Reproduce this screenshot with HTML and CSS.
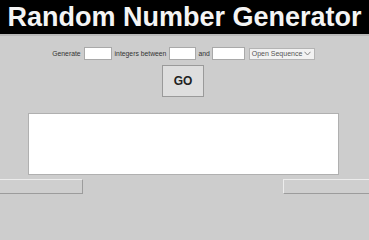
FILE: index.html
```html
<!DOCTYPE html>
<html>
<head>
<meta charset="utf-8">
<link rel="stylesheet" href="styles.css">
</head>
<body>
<header class="header"><h1 class="title">Random Number Generator</h1></header>
<main class="page">
  <div class="form-row">
    <span class="label">Generate</span>
    <input class="field field-count" type="text">
    <span class="label">integers between</span>
    <input class="field field-min" type="text">
    <span class="label label-and">and</span>
    <input class="field field-max" type="text">
    <div class="select">
      <span class="select-text">Open Sequence</span>
      <svg class="chev" width="7" height="5" viewBox="0 0 7 5"><path d="M0.5 0.8 L3.5 4 L6.5 0.8" fill="none" stroke="#777" stroke-width="0.9"/></svg>
    </div>
  </div>
  <button class="go" type="button">GO</button>
  <textarea class="output"></textarea>
</main>
<footer class="footer">
  <div class="bar bar-left"></div>
  <div class="bar bar-right"></div>
</footer>
</body>
</html>
```
FILE: styles.css
```css
html, body {
  margin: 0;
  padding: 0;
  background: #cdcdcd;
  font-family: "Liberation Sans", Arial, sans-serif;
}
html {
  height: 200px;
  overflow: hidden;
}
body {
  height: 200px;
  overflow: hidden;
}
.header {
  background: #000;
  height: 34px;
  border-bottom: 2px solid #b8b8b8;
}
.title {
  margin: 0;
  color: #f4f4f4;
  font-size: 27px;
  line-height: 35px;
  font-weight: bold;
  text-align: center;
  letter-spacing: 0;
}
.page {
  display: flex;
  flex-direction: column;
  align-items: center;
  padding-right: 3px;
}
.form-row {
  display: flex;
  align-items: center;
  margin-top: 11px;
  height: 13px;
  margin-left: 1px;
}
.label {
  font-size: 6.8px;
  color: #333;
  white-space: nowrap;
}
.field {
  box-sizing: border-box;
  height: 13px;
  margin: 0 3px;
  padding: 0;
  border: 1px solid #a9a9a9;
  background: #fff;
}
.field-count { width: 28px; }
.field-min { width: 27px; }
.field-max { width: 33px; margin-left: 2px; margin-right: 4px; }
.label-and { margin-left: -1px; }
.select {
  box-sizing: border-box;
  width: 66px;
  height: 12px;
  border: 1px solid #b4b4b4;
  background: #f2f2f2;
  display: flex;
  align-items: center;
  justify-content: space-between;
  padding: 0 3px 0 2px;
}
.select-text {
  font-size: 7px;
  color: #555;
  white-space: nowrap;
}
.go {
  box-sizing: border-box;
  width: 42px;
  height: 32px;
  margin-top: 5px;
  border: 1px solid #9a9a9a;
  background: #dedede;
  font-family: "Liberation Sans", Arial, sans-serif;
  font-weight: bold;
  font-size: 12px;
  color: #222;
  padding: 0;
}
.output {
  box-sizing: border-box;
  width: 311px;
  height: 62px;
  margin-top: 16px;
  border: 1px solid #b0b0b0;
  background: #fff;
  resize: none;
  display: block;
}
.footer {
  display: flex;
  justify-content: space-between;
  margin-top: 4px;
}
.bar {
  box-sizing: border-box;
  height: 15px;
  background: #cfcfcf;
  border-top: 1px solid #ececec;
  border-bottom: 1px solid #9c9c9c;
}
.bar-left {
  width: 83px;
  border-right: 1px solid #9c9c9c;
}
.bar-right {
  width: 86px;
  border-left: 1px solid #ececec;
}
```
